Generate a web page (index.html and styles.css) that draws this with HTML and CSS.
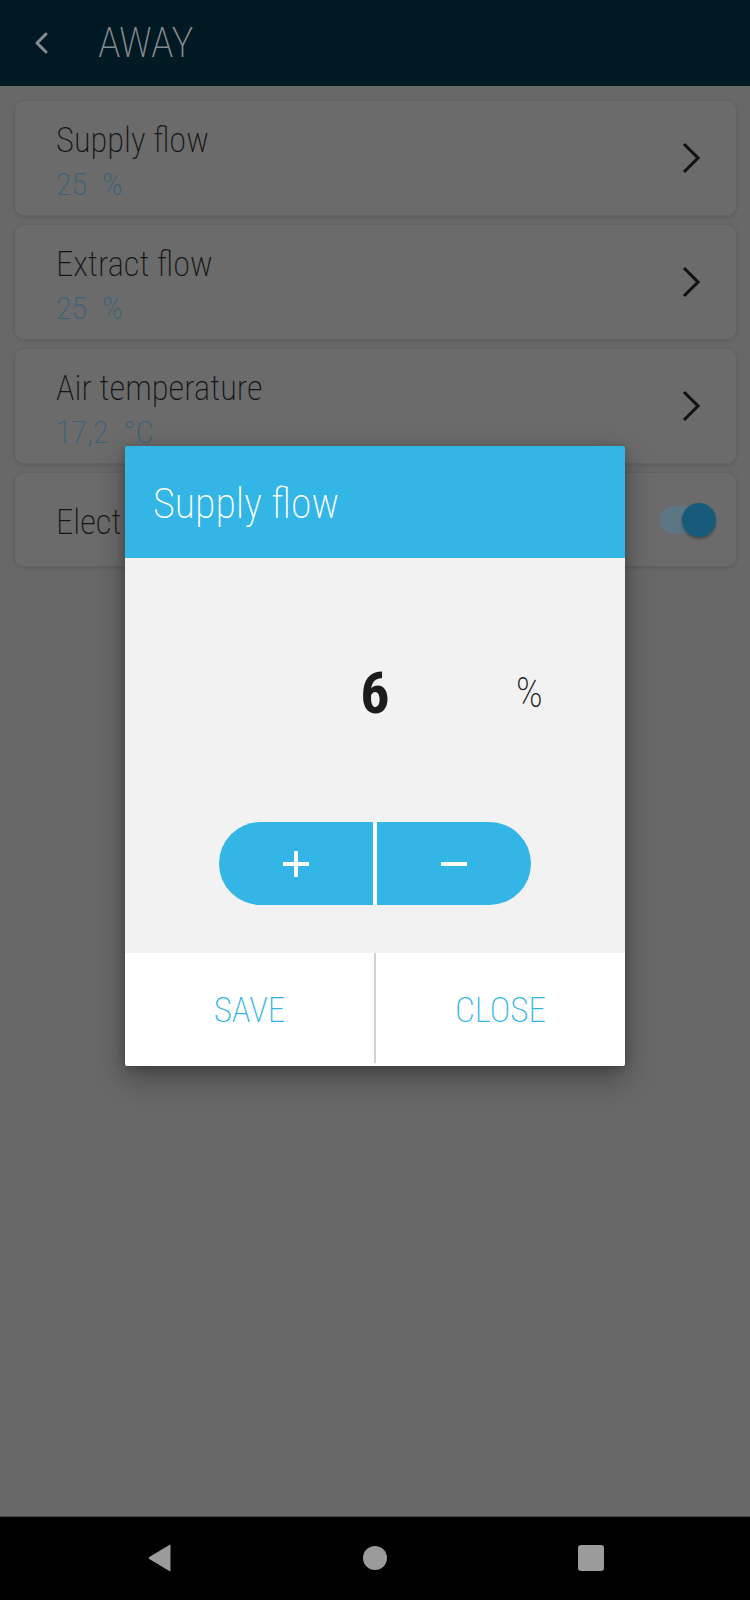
FILE: index.html
```html
<!DOCTYPE html>
<html lang="en">
<head>
<meta charset="utf-8">
<title>Away</title>
<link rel="stylesheet" href="styles.css">
</head>
<body>
<div class="screen">
  <header class="topbar">
    <svg class="back" width="16" height="24" viewBox="0 0 16 24"><polyline points="12,3 3,12 12,21" fill="none" stroke="currentColor" stroke-width="3" stroke-linecap="round" stroke-linejoin="round"/></svg>
    <h1 class="title">AWAY</h1>
  </header>

  <main class="list">
    <div class="card">
      <div class="card-text">
        <div class="card-title">Supply flow</div>
        <div class="card-value">25<span class="unit">%</span></div>
      </div>
      <svg class="chev" width="20" height="32" viewBox="0 0 20 32"><polyline points="3,2 17,16 3,30" fill="none" stroke="currentColor" stroke-width="3"/></svg>
    </div>
    <div class="card">
      <div class="card-text">
        <div class="card-title">Extract flow</div>
        <div class="card-value">25<span class="unit">%</span></div>
      </div>
      <svg class="chev" width="20" height="32" viewBox="0 0 20 32"><polyline points="3,2 17,16 3,30" fill="none" stroke="currentColor" stroke-width="3"/></svg>
    </div>
    <div class="card">
      <div class="card-text">
        <div class="card-title">Air temperature</div>
        <div class="card-value">17,2<span class="unit">°C</span></div>
      </div>
      <svg class="chev" width="20" height="32" viewBox="0 0 20 32"><polyline points="3,2 17,16 3,30" fill="none" stroke="currentColor" stroke-width="3"/></svg>
    </div>
    <div class="card card-switch">
      <div class="card-title single">Elect</div>
      <div class="switch"><span class="thumb"></span></div>
    </div>
  </main>

  <nav class="navbar">
    <svg width="25" height="28" viewBox="0 0 25 28"><path d="M23.5 1.5 L23.5 26.5 Q23.5 28 22.3 27.1 L2.3 15 Q1 14 2.3 13 L22.3 0.9 Q23.5 0 23.5 1.5 Z" fill="currentColor"/></svg>
    <svg width="24" height="24" viewBox="0 0 24 24"><circle cx="12" cy="12" r="12" fill="currentColor"/></svg>
    <svg width="26" height="26" viewBox="0 0 26 26"><rect x="0" y="0" width="26" height="26" rx="3" fill="currentColor"/></svg>
  </nav>

  <section class="dialog">
    <div class="dialog-head">Supply flow</div>
    <div class="dialog-body">
      <div class="value-row">
        <span class="big-value">6</span>
        <span class="big-unit">%</span>
      </div>
      <div class="stepper">
        <button class="step step-plus" type="button">
          <svg width="26" height="26" viewBox="0 0 26 26"><path d="M13 0 V26 M0 13 H26" stroke="#fff" stroke-width="4"/></svg>
        </button>
        <span class="step-gap"></span>
        <button class="step step-minus" type="button">
          <svg width="26" height="26" viewBox="0 0 26 26"><path d="M0 13 H26" stroke="#fff" stroke-width="4"/></svg>
        </button>
      </div>
    </div>
    <div class="dialog-foot">
      <button class="action" type="button">SAVE</button>
      <span class="foot-divider"></span>
      <button class="action" type="button">CLOSE</button>
    </div>
  </section>
</div>
</body>
</html>
```

FILE: styles.css
```css
* { box-sizing: border-box; }

html, body {
  margin: 0;
  padding: 0;
}

body {
  width: 750px;
  height: 1600px;
  background: #686868;
  font-family: "Roboto Condensed", "Roboto", "Liberation Sans", sans-serif;
  font-weight: 250;
  font-stretch: condensed;
  overflow: hidden;
}

.screen {
  position: relative;
  width: 750px;
  height: 1600px;
  display: flex;
  flex-direction: column;
}

/* top bar */
.topbar {
  height: 86px;
  flex: none;
  background: #011923;
  display: flex;
  align-items: center;
  padding-left: 34px;
  color: #868c90;
}
.back { display: block; }
.title {
  margin: 0 0 0 48px;
  font-size: 42px;
  font-weight: 250;
  line-height: 1;
  color: #868c90;
}

/* list */
.list {
  flex: 1;
  display: flex;
  flex-direction: column;
  gap: 8px;
  padding: 14px 13px 0 14px;
}
.card {
  height: 116px;
  border-radius: 10px;
  background: #6b6b6b;
  border: 1px solid #636363;
  box-shadow: 0 1px 3px rgba(0, 0, 0, 0.12);
  display: flex;
  align-items: center;
  justify-content: space-between;
  padding: 0 35px 0 41px;
}
.card-text { margin-top: 8px; }
.card-title {
  font-size: 34.5px;
  line-height: 44px;
  color: #141414;
}
.card-value {
  font-size: 32px;
  line-height: 44px;
  color: #386279;
}
.unit { margin-left: 15px; }
.chev { color: #111; display: block; }

.card-switch {
  height: 95px;
  padding-right: 20px;
}
.card-title.single {
  margin-top: 4px;
  white-space: nowrap;
}
.switch {
  position: relative;
  width: 56px;
  height: 34px;
  display: flex;
  align-items: center;
}
.switch::before {
  content: "";
  display: block;
  width: 50px;
  height: 28px;
  border-radius: 14px;
  background: #5d7684;
}
.thumb {
  position: absolute;
  right: 0;
  top: 0;
  width: 34px;
  height: 34px;
  border-radius: 50%;
  background: #175a79;
  box-shadow: 0 2px 3px rgba(0, 0, 0, 0.3);
}

/* nav bar */
.navbar {
  height: 84px;
  flex: none;
  background: #000;
  border-top: 1px solid #4a4a4a;
  display: flex;
  align-items: center;
  justify-content: center;
  gap: 191px;
  color: #9b9b9b;
  padding-bottom: 2px;
}
.navbar svg { display: block; }

/* dialog */
.dialog {
  position: absolute;
  left: 125px;
  top: 446px;
  width: 500px;
  height: 620px;
  display: flex;
  flex-direction: column;
  border-radius: 2px;
  overflow: hidden;
  box-shadow: 0 12px 30px rgba(0, 0, 0, 0.35), 0 2px 8px rgba(0, 0, 0, 0.2);
}
.dialog-head {
  height: 112px;
  flex: none;
  background: #33b5e5;
  color: #fff;
  font-size: 42px;
  line-height: 112px;
  padding: 2px 0 0 28px;
}
.dialog-body {
  height: 395px;
  flex: none;
  background: #f2f2f2;
  padding-top: 106px;
  display: flex;
  flex-direction: column;
  align-items: center;
}
.value-row {
  width: 100%;
  height: 58px;
  display: grid;
  grid-template-columns: 1fr auto 1fr;
  align-items: center;
}
.big-value {
  grid-column: 2;
  font-size: 58px;
  line-height: 58px;
  font-weight: 700;
  color: #1c1c1c;
}
.big-unit {
  grid-column: 3;
  justify-self: start;
  padding-left: 126px;
  font-size: 42px;
  line-height: 42px;
  color: #222;
}
.stepper {
  margin-top: 100px;
  display: flex;
  height: 83px;
}
.step {
  width: 154px;
  height: 83px;
  border: 0;
  padding: 0;
  margin: 0;
  background: #33b5e5;
  display: flex;
  align-items: center;
  justify-content: center;
}
.step svg { display: block; }
.step-plus { border-radius: 42px 0 0 42px; }
.step-minus { border-radius: 0 42px 42px 0; }
.step-gap { width: 4px; background: #fff; }

.dialog-foot {
  flex: 1;
  background: #fff;
  display: flex;
}
.action {
  flex: 1;
  border: 0;
  margin: 0;
  padding: 2px 0 0;
  background: transparent;
  font-family: inherit;
  font-weight: 250;
  font-stretch: condensed;
  font-size: 35px;
  color: #33b5e5;
}
.foot-divider {
  width: 2px;
  margin-bottom: 3px;
  background: #d2d2d2;
}
```
